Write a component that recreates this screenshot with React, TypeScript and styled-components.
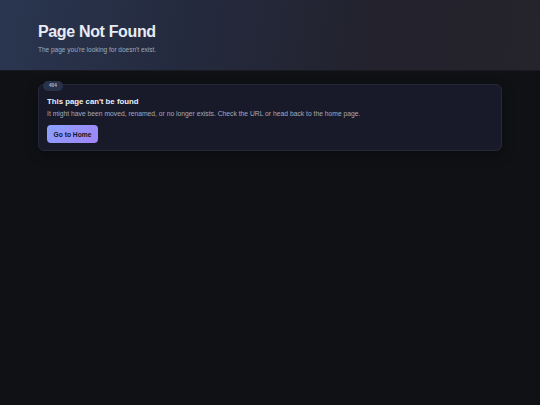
import styled, { createGlobalStyle } from 'styled-components';

const GlobalStyle = createGlobalStyle`
  html, body {
    margin: 0;
    padding: 0;
    background: #101115;
    font-family: "Liberation Sans", Arial, sans-serif;
  }
  #root {
    min-height: 405px;
  }
`;

const Page = styled.div`
  min-height: 405px;
  background: #101115;
`;

const Header = styled.header`
  box-sizing: border-box;
  height: 71px;
  padding: 22px 38px 0;
  background: linear-gradient(100deg, #2a3650 0%, #242a3e 35%, #23222d 70%, #25242c 100%);
  border-bottom: 1px solid #1a1b22;
`;

const Title = styled.h1`
  margin: 0;
  font-size: 16px;
  line-height: 19px;
  font-weight: 700;
  letter-spacing: -0.35px;
  color: #e8ebf3;
`;

const Subtitle = styled.p`
  margin: 5px 0 0;
  font-size: 6.5px;
  line-height: 8px;
  color: #a3aabb;
`;

const Main = styled.main`
  padding: 13px 38px 0 38px;
  width: 464px;
`;

const Card = styled.section`
  position: relative;
  box-sizing: border-box;
  padding: 12px 8px 7px;
  background: #181a2a;
  border: 1px solid #262939;
  border-radius: 6px;
  box-shadow: 0 4px 12px rgba(0, 0, 0, 0.35);
`;

const Badge = styled.span`
  position: absolute;
  top: -4px;
  left: 4px;
  padding: 0 6px;
  height: 10px;
  line-height: 10px;
  border-radius: 5px;
  background: #28324a;
  color: #aab4cc;
  font-size: 4.7px;
  font-weight: 700;
`;

const CardTitle = styled.h2`
  margin: 0;
  font-size: 7.8px;
  line-height: 10px;
  font-weight: 700;
  color: #eceef5;
`;

const CardText = styled.p`
  margin: 3px 0 0;
  font-size: 6.75px;
  line-height: 8px;
  color: #a4a9ba;
`;

const HomeButton = styled.button`
  margin-top: 7px;
  width: 51px;
  height: 18px;
  padding: 0;
  border: none;
  border-radius: 4px;
  background: linear-gradient(135deg, #8aa2ff 0%, #a084f5 100%);
  color: #12131c;
  font-family: "Liberation Sans", Arial, sans-serif;
  font-size: 6.7px;
  font-weight: 700;
  cursor: pointer;
`;

const App = () => {
  return (
    <Page>
      <GlobalStyle />
      <Header>
        <Title>Page Not Found</Title>
        <Subtitle>The page you're looking for doesn't exist.</Subtitle>
      </Header>
      <Main>
        <Card>
          <Badge>404</Badge>
          <CardTitle>This page can't be found</CardTitle>
          <CardText>
            It might have been moved, renamed, or no longer exists. Check the URL or head back to the home page.
          </CardText>
          <HomeButton>Go to Home</HomeButton>
        </Card>
      </Main>
    </Page>
  );
};

export default App;
